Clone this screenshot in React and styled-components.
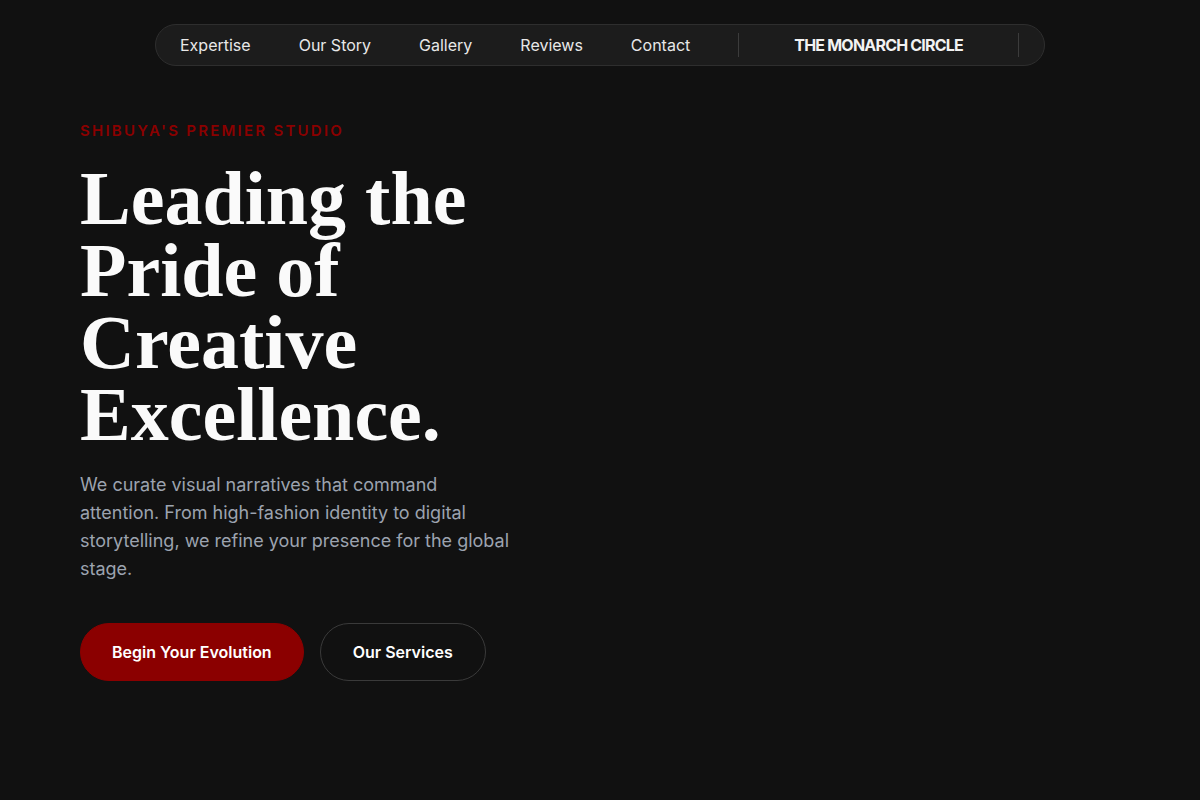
import React from 'react'
import styled, { createGlobalStyle } from 'styled-components'

const GlobalStyle = createGlobalStyle`
  html, body {
    margin: 0;
    padding: 0;
    background: #111111;
  }
  body {
    font-family: Inter, 'Noto Sans', sans-serif;
    color: #f5f5f5;
    min-height: 800px;
  }
`

const links = ['Expertise', 'Our Story', 'Gallery', 'Reviews', 'Contact']

const App = () => {
  return (
    <>
      <GlobalStyle />
      <Page>
        <NavBar>
          <NavLinks>
            {links.map((l) => (
              <NavLink key={l}>{l}</NavLink>
            ))}
          </NavLinks>
          <Divider />
          <Brand>THE MONARCH CIRCLE</Brand>
          <Divider />
        </NavBar>
        <Hero>
          <Eyebrow>SHIBUYA&apos;S PREMIER STUDIO</Eyebrow>
          <Title>
            Leading the
            <br />
            Pride of
            <br />
            Creative
            <br />
            Excellence.
          </Title>
          <Lead>
            We curate visual narratives that command attention. From
            high-fashion identity to digital storytelling, we refine your
            presence for the global stage.
          </Lead>
          <Actions>
            <Button $primary>Begin Your Evolution</Button>
            <Button>Our Services</Button>
          </Actions>
        </Hero>
      </Page>
    </>
  )
}

const Page = styled.div`
  min-height: 800px;
  padding: 24px 0 0;
  box-sizing: border-box;
  display: flex;
  flex-direction: column;
`

const NavBar = styled.nav`
  align-self: center;
  width: 890px;
  height: 42px;
  box-sizing: border-box;
  display: flex;
  align-items: center;
  padding: 0 25px 0 24px;
  background: #1c1c1c;
  border: 1px solid #2e2e2e;
  border-radius: 999px;
`

const NavLinks = styled.ul`
  display: flex;
  gap: 48px;
  margin: 0 48px 0 0;
  padding: 0;
  list-style: none;
`

const NavLink = styled.li`
  font-size: 16px;
  color: #e8e8e8;
  white-space: nowrap;
`

const Divider = styled.span`
  width: 1px;
  height: 24px;
  background: #3c3c3c;
`

const Brand = styled.div`
  flex: 1;
  text-align: center;
  font-size: 16px;
  font-weight: 700;
  letter-spacing: -0.05em;
  color: #f2f2f2;
`

const Hero = styled.section`
  display: flex;
  flex-direction: column;
  align-items: flex-start;
  padding: 55px 80px 0;
`

const Eyebrow = styled.p`
  margin: 0 0 21px;
  font-size: 15px;
  line-height: 20px;
  font-weight: 600;
  letter-spacing: 0.15em;
  color: #8b0000;
`

const Title = styled.h1`
  margin: 0 0 21px;
  font-family: 'Liberation Serif', 'DejaVu Serif', serif;
  font-weight: 700;
  font-size: 76px;
  line-height: 72px;
  color: #fafafa;
`

const Lead = styled.p`
  margin: 0 0 40px;
  max-width: 436px;
  font-size: 18px;
  line-height: 28px;
  color: #9ca3af;
`

const Actions = styled.div`
  display: flex;
  gap: 16px;
`

const Button = styled.button`
  height: 58px;
  padding: 0 ${(p) => (p.$primary ? '31px' : '32px')};
  border-radius: 999px;
  font-family: Inter, sans-serif;
  font-size: 16px;
  font-weight: 600;
  color: #ffffff;
  background: ${(p) => (p.$primary ? '#8b0000' : 'transparent')};
  border: 1px solid ${(p) => (p.$primary ? '#8b0000' : '#3a3a3a')};
  cursor: pointer;
`

export default App
